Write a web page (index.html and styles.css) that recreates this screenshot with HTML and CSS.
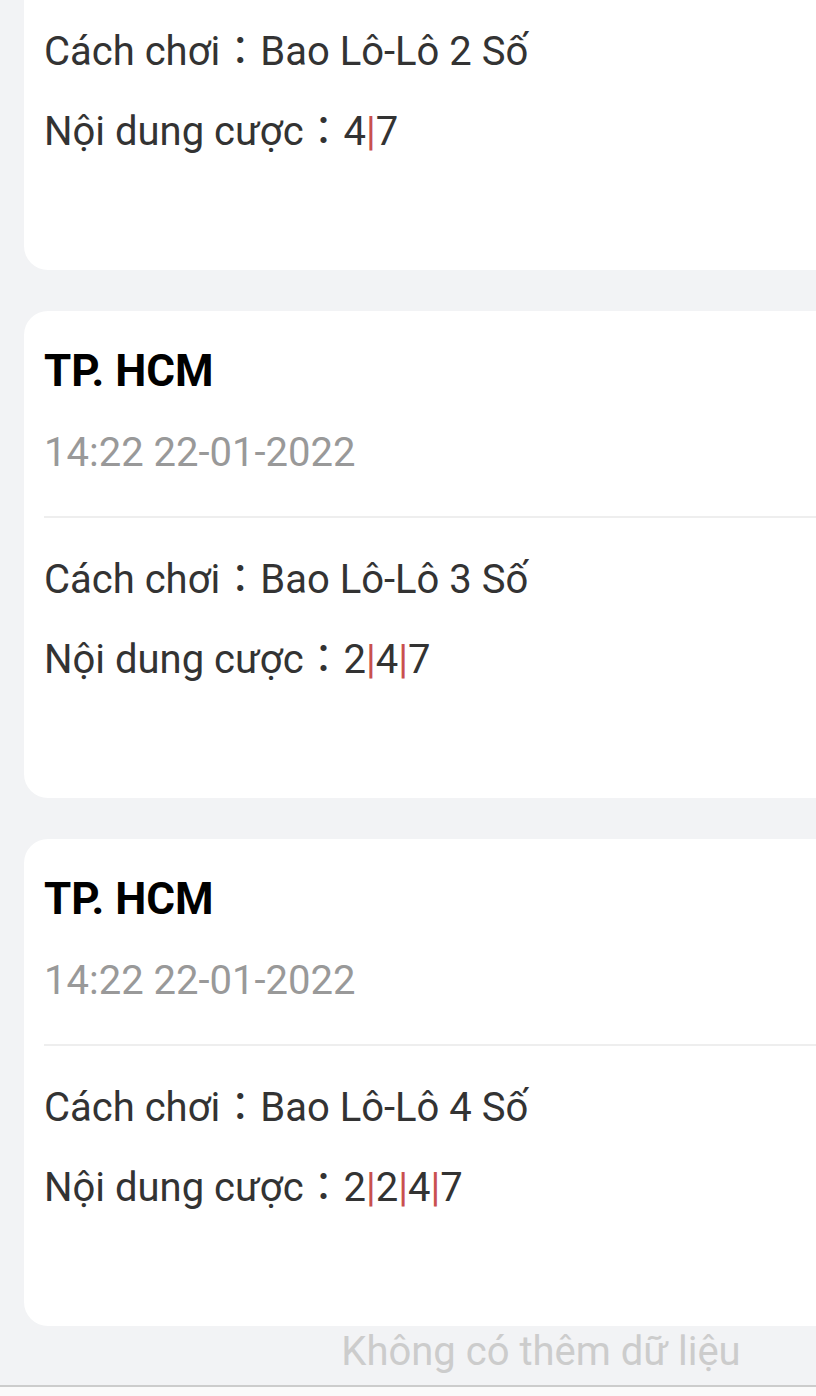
FILE: index.html
```html
<!DOCTYPE html>
<html lang="vi">
<head>
  <meta charset="UTF-8">
  <meta name="viewport" content="width=device-width, initial-scale=1.0">
  <title>Lịch sử cược</title>
  <link rel="stylesheet" href="styles.css">
</head>
<body>
  <div class="list">
    <div class="card card-first">
      <div class="title">TP. HCM</div>
      <div class="time">14:22 22-01-2022</div>
      <div class="divider"></div>
      <div class="row">Cách chơi<span class="colon">：</span>Bao Lô-Lô 2 Số</div>
      <div class="row">Nội dung cược<span class="colon">：</span>4<span class="sep">|</span>7</div>
    </div>

    <div class="card">
      <div class="title">TP. HCM</div>
      <div class="time">14:22 22-01-2022</div>
      <div class="divider"></div>
      <div class="row">Cách chơi<span class="colon">：</span>Bao Lô-Lô 3 Số</div>
      <div class="row">Nội dung cược<span class="colon">：</span>2<span class="sep">|</span>4<span class="sep">|</span>7</div>
    </div>

    <div class="card">
      <div class="title">TP. HCM</div>
      <div class="time">14:22 22-01-2022</div>
      <div class="divider"></div>
      <div class="row">Cách chơi<span class="colon">：</span>Bao Lô-Lô 4 Số</div>
      <div class="row">Nội dung cược<span class="colon">：</span>2<span class="sep">|</span>2<span class="sep">|</span>4<span class="sep">|</span>7</div>
    </div>

    <div class="no-more">Không có thêm dữ liệu</div>
  </div>
</body>
</html>
```

FILE: styles.css
```css
* {
  margin: 0;
  padding: 0;
  box-sizing: border-box;
}

html, body {
  overflow: hidden;
}

body {
  font-family: Roboto, "Noto Sans CJK JP", sans-serif;
  background-color: #fafafa;
  color: #333;
}

.list {
  width: 1082px;
  background-color: #f2f3f5;
  border-bottom: 2px solid #ccc;
}

.card {
  background-color: #fff;
  margin: 0 24px 41px;
  padding: 24px 20px 98px;
  border-radius: 24px;
}

.card-first {
  margin-top: -217px;
}

.title {
  font-size: 44px;
  font-weight: bold;
  line-height: 72px;
  color: #000;
}

.time {
  margin-top: 6px;
  font-size: 40px;
  line-height: 80px;
  color: #999;
}

.divider {
  height: 2px;
  margin-top: 23px;
  margin-bottom: 22px;
  background-color: #eee;
}

.row {
  font-size: 40px;
  line-height: 80px;
  color: #333;
}

.colon {
  font-family: "Noto Sans CJK JP", sans-serif;
  line-height: 40px;
}

.sep {
  color: #c9504f;
}

.no-more {
  margin-top: -41px;
  height: 59px;
  padding-bottom: 7px;
  text-align: center;
  font-size: 40px;
  line-height: 52px;
  color: #ccc;
}
```
